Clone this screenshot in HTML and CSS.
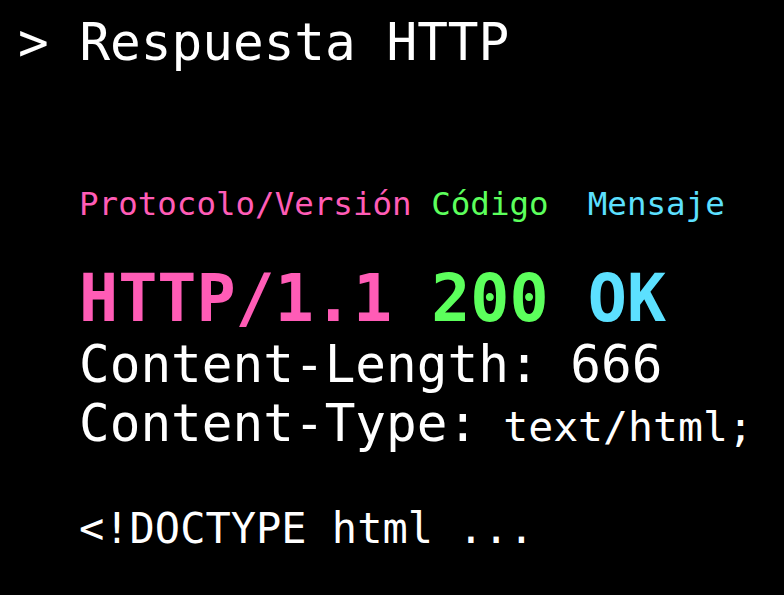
FILE: index.html
```html
<!DOCTYPE html>
<html lang="es">
<head>
    <meta charset="UTF-8">
    <meta name="viewport" content="width=device-width, initial-scale=1.0">
    <title>Respuesta HTTP</title>
    <link rel="stylesheet" href="styles.css">
</head>
<body>
    <h1 class="title">&gt; Respuesta HTTP</h1>
    <div class="response">
        <div class="labels"><span class="pink">Protocolo/Versión</span> <span class="green">Código</span>&nbsp; <span class="cyan">Mensaje</span></div>
        <div class="status-line"><span class="pink">HTTP/1.1</span> <span class="green">200</span> <span class="cyan">OK</span></div>
        <div class="header-line">Content-Length: 666</div>
        <div class="header-line header-type">Content-Type:<span class="value"> text/html;</span></div>
        <div class="body-line">&lt;!DOCTYPE html ...</div>
    </div>
</body>
</html>
```

FILE: styles.css
```css
body {
    margin: 0;
    background: #000;
    color: #fff;
    font-family: "DejaVu Sans Mono", "Liberation Mono", monospace;
    width: 784px;
    height: 595px;
    overflow: hidden;
}

.title {
    margin: 17px 0 0 18px;
    font-size: 51px;
    line-height: 51px;
    font-weight: 500;
    white-space: nowrap;
}

.response {
    display: flex;
    flex-direction: column;
    padding-left: 79px;
    white-space: nowrap;
}

.labels {
    margin-top: 120px;
    font-size: 32.5px;
    line-height: 32.5px;
}

.status-line {
    margin-top: 45px;
    font-size: 65px;
    line-height: 65px;
    font-weight: bold;
}

.header-line {
    font-size: 51px;
    line-height: 51px;
    margin-top: 8px;
}

.header-type {
    margin-top: 8px;
}

.header-type .value {
    font-size: 41.5px;
    line-height: 41.5px;
}

.body-line {
    margin-top: 59px;
    font-size: 42px;
    line-height: 42px;
}

.pink {
    color: #ff5cb6;
}

.green {
    color: #5cff5c;
}

.cyan {
    color: #5ce0ff;
}
```
